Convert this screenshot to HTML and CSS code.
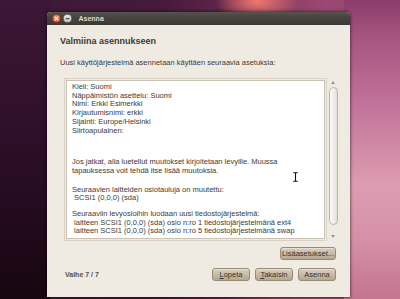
FILE: index.html
```html
<!DOCTYPE html>
<html lang="fi">
<head>
<meta charset="utf-8">
<title>Asenna</title>
<link rel="stylesheet" href="styles.css">
</head>
<body>
<div class="window">
  <div class="titlebar">
    <span class="tbtn">
      <svg width="9" height="9" viewBox="0 0 9 9">
        <defs>
          <radialGradient id="og" cx="0.45" cy="0.35" r="0.7">
            <stop offset="0" stop-color="#f88a5a"/>
            <stop offset="1" stop-color="#d24a1c"/>
          </radialGradient>
        </defs>
        <circle cx="4.5" cy="4.5" r="4.1" fill="url(#og)" stroke="#6e3016" stroke-width="0.6"/>
        <path d="M3 3 L6 6 M6 3 L3 6" stroke="#fff" stroke-width="1.1" stroke-linecap="round"/>
      </svg>
    </span>
    <span class="tbtn">
      <svg width="9" height="9" viewBox="0 0 9 9">
        <defs>
          <linearGradient id="gg" x1="0" y1="0" x2="0" y2="1">
            <stop offset="0" stop-color="#f2f0ec"/>
            <stop offset="1" stop-color="#bdb9b1"/>
          </linearGradient>
        </defs>
        <circle cx="4.5" cy="4.5" r="4.1" fill="url(#gg)" stroke="#57544e" stroke-width="0.6"/>
        <path d="M2.9 4.6 L6.1 4.6" stroke="#5a5750" stroke-width="1.1" stroke-linecap="round"/>
      </svg>
    </span>
    <span class="title">Asenna</span>
  </div>
  <div class="content">
    <h1 class="heading">Valmiina asennukseen</h1>
    <p class="intro">Uusi käyttöjärjestelmä asennetaan käyttäen seuraavia asetuksia:</p>
    <div class="scrolled">
      <div class="frame">
        <div class="inner">
          <p class="para p1">Kieli: Suomi<br>Näppäimistön asettelu: Suomi<br>Nimi: Erkki Esimerkki<br>Kirjautumisnimi: erkki<br>Sijainti: Europe/Helsinki<br>Siirtoapulainen:</p>
          <p class="para p2">Jos jatkat, alla luetellut muutokset kirjoitetaan levyille. Muussa<br>tapauksessa voit tehdä itse lisää muutoksia.</p>
          <p class="para p3">Seuraavien laitteiden osiotauluja on muutettu:<br>&nbsp;SCSI1 (0,0,0) (sda)</p>
          <p class="para p4">Seuraaviin levyosioihin luodaan uusi tiedostojärjestelmä:<br>&nbsp;laitteen SCSI1 (0,0,0) (sda) osio n:ro 1 tiedostojärjestelmänä ext4<br>&nbsp;laitteen SCSI1 (0,0,0) (sda) osio n:ro 5 tiedostojärjestelmänä swap</p>
        </div>
      </div>
      <div class="scrollbar">
        <span class="arrow up"></span>
        <span class="thumb"></span>
        <span class="arrow down"></span>
      </div>
    </div>
    <div class="adv-row">
      <button class="btn adv">Lisäasetukset...</button>
    </div>
    <div class="footer">
      <span class="step">Vaihe 7 / 7</span>
      <div class="buttons">
        <button class="btn"><u>L</u>opeta</button>
        <button class="btn"><u>T</u>akaisin</button>
        <button class="btn">Asenna</button>
      </div>
    </div>
  </div>
  <svg class="cursor" width="7" height="10" viewBox="0 0 7 10">
    <path d="M1 0.8 H6 M3.5 0.8 V9.2 M1 9.2 H6" stroke="#fff" stroke-width="2.4"/>
    <path d="M1.3 0.8 H5.7 M3.5 0.8 V9.2 M1.3 9.2 H5.7" stroke="#111" stroke-width="1.1"/>
  </svg>
</div>
</body>
</html>
```
FILE: styles.css
```css
html, body {
  margin: 0;
  padding: 0;
}

body {
  width: 400px;
  height: 299px;
  overflow: hidden;
  font-family: "Liberation Sans", Arial, sans-serif;
  background:
    radial-gradient(ellipse 42px 22px at 257px 1px, rgba(246, 124, 112, 0.95), rgba(246, 124, 112, 0) 100%),
    linear-gradient(180deg, #8a3d69 0%, #a65380 12%, #c2739a 35%, #dd9db1 62%, #d590a7 80%, #c47590 100%) right top / 56px 100% no-repeat,
    linear-gradient(180deg, #3d1736 0%, #2e0f29 45%, #220a1d 75%, #17060f 100%) left top / 50px 100% no-repeat,
    linear-gradient(90deg, #3d1736 0%, #451a3b 40%, #5e2448 55%, #8a3c62 68%, #9a4a72 82%, #8a3f6a 100%);
}

.window {
  position: relative;
  margin: 12px 0 0 47px;
  width: 303px;
  height: 285px;
  background: #efebe3;
  border-radius: 4px 4px 0 0;
  box-shadow: 0 0 3px 1px rgba(0, 0, 0, 0.45);
  display: flex;
  flex-direction: column;
}

.titlebar {
  height: 13px;
  flex: none;
  display: flex;
  align-items: center;
  padding-left: 5px;
  border-radius: 4px 4px 0 0;
  background: linear-gradient(180deg, #55544f 0%, #45443f 40%, #3a3935 100%);
}

.tbtn {
  width: 9px;
  height: 9px;
  margin-right: 1.5px;
  display: flex;
}

.title {
  margin-left: 5.5px;
  font-size: 7px;
  font-weight: bold;
  color: #dcd8ce;
  line-height: 13px;
}

.content {
  padding: 11px 14px 0 13px;
  color: #3c3b37;
}

.heading {
  margin: 0 0 11px;
  font-size: 9px;
  line-height: 11px;
  font-weight: bold;
  color: #3c3b37;
}

.intro {
  margin: 0 0 11px;
  font-size: 7.5px;
  line-height: 9px;
}

.scrolled {
  display: flex;
  width: 274px;
  height: 163px;
  margin-left: 4px;
}

.frame {
  width: 263px;
  height: 163px;
  box-sizing: border-box;
  border: 1px solid #d9d2c5;
  padding: 1px;
  flex: none;
}

.inner {
  height: 100%;
  box-sizing: border-box;
  border: 1px solid #c9c1b1;
  background: #ffffff;
  padding: 2px 5px;
  overflow: hidden;
}

.para {
  margin: 0;
  font-size: 7.5px;
  line-height: 8.7px;
  white-space: nowrap;
  color: #3c3b37;
}

.p2 { margin-top: 23.1px; }
.p3 { margin-top: 10px; }
.p4 { margin-top: 6.9px; }

.scrollbar {
  width: 10px;
  margin-left: 1px;
  display: flex;
  flex-direction: column;
  align-items: center;
  padding: 3px 0 3px;
  box-sizing: border-box;
  height: 163px;
}

.arrow {
  width: 0;
  height: 0;
  border-left: 2px solid transparent;
  border-right: 2px solid transparent;
}

.arrow.up {
  border-bottom: 3px solid #9a9488;
}

.arrow.down {
  margin-top: auto;
  border-top: 3px solid #9a9488;
}

.thumb {
  margin-top: 3px;
  width: 9px;
  height: 138px;
  box-sizing: border-box;
  border: 1px solid #bdb5a6;
  border-radius: 5px;
  background: linear-gradient(90deg, #fbfaf7 0%, #f1ede6 60%, #e2ddd3 100%);
}

.adv-row {
  display: flex;
  justify-content: flex-end;
  margin-top: 6px;
}

.btn {
  height: 13px;
  width: 38px;
  padding: 0;
  box-sizing: border-box;
  border: 1px solid #958a76;
  border-radius: 3px;
  background: linear-gradient(180deg, #d9cfbf 0%, #c7bba7 50%, #b4a78f 100%);
  box-shadow: inset 0 1px 0 rgba(255, 255, 255, 0.35);
  font-family: "Liberation Sans", Arial, sans-serif;
  font-size: 7.5px;
  line-height: 11px;
  color: #36332e;
  text-align: center;
}

.btn.adv {
  width: 56px;
}

.footer {
  margin-top: 8px;
  height: 13px;
  display: flex;
  align-items: center;
  justify-content: space-between;
}

.step {
  padding-left: 5px;
  font-size: 7px;
  font-weight: bold;
  color: #55524c;
}

.buttons {
  display: flex;
  gap: 5px;
}

.cursor {
  position: absolute;
  left: 245px;
  top: 160px;
}
```
